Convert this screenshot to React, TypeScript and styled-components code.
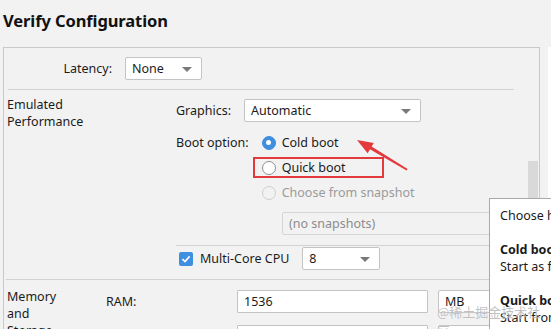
import React from "react";
import styled, { createGlobalStyle } from "styled-components";

const GlobalStyle = createGlobalStyle`
  html, body {
    margin: 0;
    padding: 0;
    background: #f2f2f2;
    overflow: hidden;
  }
  body {
    font-family: "Noto Sans", "Noto Sans CJK SC", sans-serif;
    font-size: 12.5px;
    color: #1b1b1b;
  }
`;

const Page = styled.div`
  position: relative;
  display: flex;
  width: 551px;
  height: 329px;
  overflow: hidden;
`;

const Main = styled.div`
  width: 548px;
  display: flex;
  flex-direction: column;
`;

const RightStrip = styled.div`
  flex: 1;
  margin-top: 47px;
  background: #ffffff;
`;

const Title = styled.h1`
  flex-shrink: 0;
  margin: 0;
  height: 47px;
  padding: 9px 0 0 3px;
  box-sizing: border-box;
  font-size: 16.5px;
  font-weight: 700;
  color: #111;
  letter-spacing: -0.1px;
`;

const Panel = styled.div`
  flex: 1;
  min-height: 0;
  margin-left: 3px;
  width: 535px;
  border: 1px solid #c9c9c9;
  border-bottom: none;
  display: flex;
  overflow: hidden;
`;

const Content = styled.div`
  width: 524px;
`;

const ScrollTrack = styled.div`
  width: 10px;
  display: flex;
  flex-direction: column;
`;

const ScrollThumb = styled.div`
  margin-top: 113px;
  flex: 1;
  background: #d9d9d9;
`;

const Divider = styled.div<{ $left: number; $width: number; $top?: number }>`
  height: 1px;
  background: #d2d2d2;
  margin-left: ${p => p.$left}px;
  margin-top: ${p => p.$top ?? 0}px;
  width: ${p => p.$width}px;
`;

const LatencyRow = styled.div`
  height: 41px;
  display: flex;
  align-items: center;
  gap: 13px;
`;

const RightLabel = styled.span`
  width: 108px;
  text-align: right;
`;

const Section = styled.div<{ $labelWidth: number }>`
  display: grid;
  grid-template-columns: ${p => p.$labelWidth}px 1fr;
  padding-left: 3px;
`;

const SectionLabel = styled.div<{ $top?: number }>`
  padding-top: ${p => p.$top ?? 6}px;
  line-height: 17px;
`;

const SectionBody = styled.div`
  display: flex;
  flex-direction: column;
  & > * {
    flex-shrink: 0;
  }
`;

const FieldRow = styled.div<{ $top?: number }>`
  display: flex;
  align-items: center;
  gap: 13px;
  margin-top: ${p => p.$top ?? 0}px;
`;

const Select = styled.div<{ $width: number; $disabled?: boolean }>`
  position: relative;
  box-sizing: border-box;
  width: ${p => p.$width}px;
  height: 23px;
  padding-left: 6px;
  display: flex;
  align-items: center;
  background: ${p => (p.$disabled ? "#f2f2f2" : "#ffffff")};
  border: 1px solid ${p => (p.$disabled ? "#d6d6d6" : "#c4c4c4")};
  border-radius: 2px;
  color: ${p => (p.$disabled ? "#8c8c8c" : "#1b1b1b")};
  flex-shrink: 0;
`;

const Caret = styled.span`
  position: absolute;
  right: 9px;
  top: 9px;
  width: 0;
  height: 0;
  border-left: 5px solid transparent;
  border-right: 5px solid transparent;
  border-top: 5px solid #7a7a7a;
`;

const Input = styled.div<{ $width: number }>`
  box-sizing: border-box;
  width: ${p => p.$width}px;
  height: 23px;
  padding-left: 6px;
  display: flex;
  align-items: center;
  background: #ffffff;
  border: 1px solid #c4c4c4;
  border-radius: 1px;
  flex-shrink: 0;
`;

const BootGroup = styled.div`
  display: flex;
  align-items: flex-start;
  gap: 13px;
  margin-top: 8px;
`;

const BootLabel = styled.span`
  line-height: 25px;
`;

const Options = styled.div`
  display: flex;
  flex-direction: column;
`;

const Option = styled.div<{ $disabled?: boolean }>`
  height: 25px;
  display: flex;
  align-items: center;
  gap: 6px;
  color: ${p => (p.$disabled ? "#9a9a9a" : "#1b1b1b")};
`;

const Radio = styled.span<{ $checked?: boolean; $disabled?: boolean }>`
  box-sizing: border-box;
  width: 14px;
  height: 14px;
  border-radius: 50%;
  display: flex;
  align-items: center;
  justify-content: center;
  background: ${p => (p.$checked ? "#3f8fe0" : p.$disabled ? "#f2f2f2" : "#ffffff")};
  border: 1px solid
    ${p => (p.$checked ? "#3f8fe0" : p.$disabled ? "#cfcfcf" : "#8f8f8f")};

  &::after {
    content: "";
    display: ${p => (p.$checked ? "block" : "none")};
    width: 5px;
    height: 5px;
    border-radius: 50%;
    background: #ffffff;
  }
`;

const SnapshotSelect = styled.div`
  margin: 7px 0 0 106px;
`;

const Checkbox = styled.span`
  width: 14px;
  height: 14px;
  border-radius: 2px;
  background: #3f8fe0;
  display: flex;
  align-items: center;
  justify-content: center;
  margin-left: 3px;
`;

const CheckLabel = styled.span`
  margin-left: -6px;
`;

const MemoryGrid = styled.div`
  display: grid;
  grid-template-columns: 121px 191px 71px;
  column-gap: 10px;
  row-gap: 12px;
  align-items: center;
  padding-top: 10px;
`;

const Popup = styled.div`
  position: absolute;
  left: 489px;
  top: 198px;
  width: 90px;
  height: 150px;
  box-sizing: border-box;
  padding: 8px 0 0 10px;
  background: #ffffff;
  border: 1px solid #a9a9a9;
  line-height: 17px;
  white-space: nowrap;
  overflow: hidden;
`;

const PopupLine = styled.div<{ $bold?: boolean; $gap?: boolean }>`
  font-weight: ${p => (p.$bold ? 700 : 400)};
  margin-top: ${p => (p.$gap ? 17 : 0)}px;
`;

const Highlight = styled.div`
  position: absolute;
  left: 253px;
  top: 157px;
  width: 131px;
  height: 21px;
  box-sizing: border-box;
  border: 2px solid #e23a3d;
`;

const Arrow = styled.svg`
  position: absolute;
  left: 350px;
  top: 135px;
`;

const Watermark = styled.div`
  position: absolute;
  left: 437px;
  top: 302px;
  font-size: 13px;
  color: rgba(140, 140, 140, 0.55);
  text-shadow: 0 0 1px rgba(255, 255, 255, 0.8);
  font-family: "Noto Sans CJK SC", sans-serif;
`;

const App: React.FC = () => {
  return (
    <Page>
      <GlobalStyle />
      <Main>
        <Title>Verify Configuration</Title>
        <Panel>
          <Content>
            <LatencyRow>
              <RightLabel>Latency:</RightLabel>
              <Select $width={77}>
                None
                <Caret />
              </Select>
            </LatencyRow>
            <Divider $left={4} $width={506} />

            <Section $labelWidth={169}>
              <SectionLabel>
                Emulated
                <br />
                Performance
              </SectionLabel>
              <SectionBody>
                <FieldRow $top={9}>
                  <span>Graphics:</span>
                  <Select $width={177}>
                    Automatic
                    <Caret />
                  </Select>
                </FieldRow>
                <BootGroup>
                  <BootLabel>Boot option:</BootLabel>
                  <Options>
                    <Option>
                      <Radio $checked />
                      Cold boot
                    </Option>
                    <Option>
                      <Radio />
                      Quick boot
                    </Option>
                    <Option $disabled>
                      <Radio $disabled />
                      Choose from snapshot
                    </Option>
                  </Options>
                </BootGroup>
                <SnapshotSelect>
                  <Select $width={230} $disabled>
                    (no snapshots)
                  </Select>
                </SnapshotSelect>
                <Divider $left={0} $width={340} $top={10} />
                <FieldRow $top={1}>
                  <Checkbox>
                    <svg width="10" height="10" viewBox="0 0 10 10">
                      <path
                        d="M1.5 5.2 L4 7.6 L8.6 2.4"
                        fill="none"
                        stroke="#ffffff"
                        strokeWidth="1.6"
                      />
                    </svg>
                  </Checkbox>
                  <CheckLabel>Multi-Core CPU</CheckLabel>
                  <Select $width={78}>
                    8
                    <Caret />
                  </Select>
                </FieldRow>
              </SectionBody>
            </Section>
            <Divider $left={2} $width={520} $top={9} />

            <Section $labelWidth={99}>
              <SectionLabel $top={8}>
                Memory
                <br />
                and
                <br />
                Storage
              </SectionLabel>
              <MemoryGrid>
                <span>RAM:</span>
                <Input $width={191}>1536</Input>
                <Select $width={71}>MB</Select>
                <span>VM heap:</span>
                <Input $width={191}>228</Input>
                <Select $width={71}>MB</Select>
              </MemoryGrid>
            </Section>
          </Content>
          <ScrollTrack>
            <ScrollThumb />
          </ScrollTrack>
        </Panel>
      </Main>
      <RightStrip />

      <Highlight />
      <Arrow width="62" height="40" viewBox="0 0 62 40">
        <polygon points="7,5 23.8,8.1 17.6,18.3" fill="#e23a3d" />
        <polygon points="20,10.5 57.6,34 56.6,35.4 18.6,13.5" fill="#e23a3d" />
      </Arrow>

      <Popup>
        <PopupLine>Choose how to start the emulator</PopupLine>
        <PopupLine $bold $gap>
          Cold boot
        </PopupLine>
        <PopupLine>Start as from power off</PopupLine>
        <PopupLine $bold $gap>
          Quick boot
        </PopupLine>
        <PopupLine>Start from saved state</PopupLine>
      </Popup>

      <Watermark>@稀土掘金技术社区</Watermark>
    </Page>
  );
};

export default App;
